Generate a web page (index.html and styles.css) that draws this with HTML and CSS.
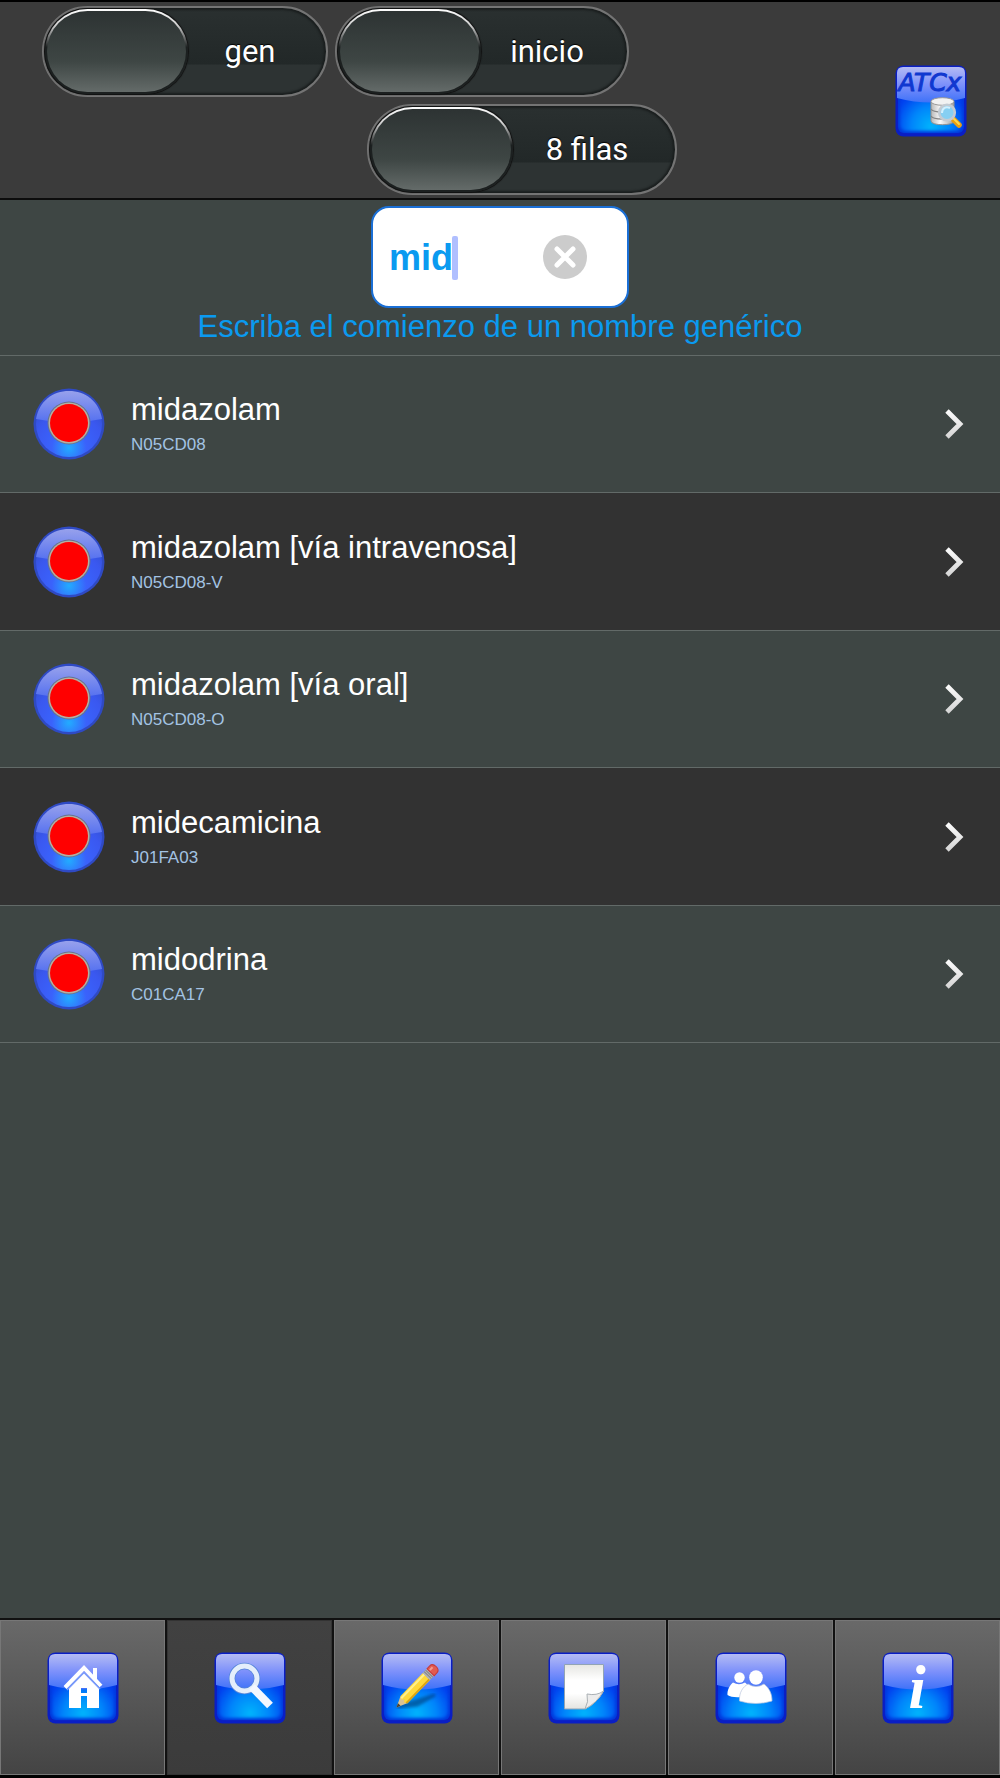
FILE: index.html
```html
<!DOCTYPE html>
<html lang="es">
<head>
<meta charset="UTF-8">
<meta name="viewport" content="width=device-width, initial-scale=1">
<title>ATCx</title>
<link rel="stylesheet" href="styles.css">
</head>
<body>

<!-- shared icon parts -->
<svg class="defs" width="0" height="0" aria-hidden="true">
  <defs>
    <radialGradient id="tileGlow" cx="0.5" cy="0.92" r="0.62">
      <stop offset="0" stop-color="#00b4fc"/>
      <stop offset="0.5" stop-color="#0086fb"/>
      <stop offset="1" stop-color="#003cee"/>
    </radialGradient>
    <linearGradient id="tileGloss" x1="0" y1="0" x2="0" y2="1">
      <stop offset="0" stop-color="#b4bbf4"/>
      <stop offset="0.5" stop-color="#7c90fb"/>
      <stop offset="1" stop-color="#3f72f8"/>
    </linearGradient>
    <radialGradient id="ballGlow" cx="0.5" cy="0.86" r="0.75">
      <stop offset="0" stop-color="#22acff"/>
      <stop offset="0.35" stop-color="#3a62fb"/>
      <stop offset="0.7" stop-color="#3a58f0"/>
      <stop offset="1" stop-color="#3350d0"/>
    </radialGradient>
    <linearGradient id="ballGloss" x1="0" y1="0" x2="0" y2="1">
      <stop offset="0" stop-color="#97a1ec"/>
      <stop offset="1" stop-color="#5470f0"/>
    </linearGradient>
    <linearGradient id="arrowFill" gradientUnits="userSpaceOnUse" x1="0" y1="0" x2="0" y2="32">
      <stop offset="0" stop-color="#fff"/>
      <stop offset="1" stop-color="#d2d2d2"/>
    </linearGradient>
    <linearGradient id="paper" x1="0" y1="0" x2="0" y2="1">
      <stop offset="0" stop-color="#e6e6e2"/>
      <stop offset="0.35" stop-color="#fff"/>
      <stop offset="0.65" stop-color="#fff"/>
      <stop offset="1" stop-color="#e4e4e0"/>
    </linearGradient>
    <linearGradient id="metal" x1="0" y1="0" x2="1" y2="0">
      <stop offset="0" stop-color="#b8b8b8"/>
      <stop offset="0.4" stop-color="#fafafa"/>
      <stop offset="1" stop-color="#a0a0a0"/>
    </linearGradient>
    <filter id="soft"><feGaussianBlur stdDeviation="1.4"/></filter>
  </defs>

  <symbol id="tile" viewBox="0 0 72 72">
    <rect x="0.5" y="0.5" width="71" height="71" rx="8" fill="#0a1ec4"/>
    <rect x="3" y="3" width="66" height="65" rx="6" fill="#0038dc"/>
    <rect x="5" y="5" width="62" height="61" rx="6" fill="url(#tileGlow)" filter="url(#soft)"/>
    <path d="M2 33V8Q2 2 8 2H64Q70 2 70 8V33Q36 42 2 33Z" fill="url(#tileGloss)"/>
  </symbol>

  <symbol id="ball" viewBox="0 0 72 72">
    <circle cx="36" cy="36" r="35.5" fill="#2f4ac4"/>
    <circle cx="36" cy="36" r="33" fill="url(#ballGlow)"/>
    <path d="M3 31C6 13 20 3 36 3S66 13 69 31Q36 38 3 31Z" fill="url(#ballGloss)"/>
    <circle cx="36" cy="35" r="21.5" fill="#65728f"/>
    <circle cx="36" cy="35" r="20.5" fill="#b4aea2"/>
    <circle cx="36" cy="35" r="19" fill="red"/>
  </symbol>

  <symbol id="arrow" viewBox="0 0 20 32">
    <path d="M3 3L16 16L3 29" fill="none" stroke="url(#arrowFill)" stroke-width="4.8"/>
  </symbol>
</svg>

<div class="page">
  <header class="header">
    <div class="toggles">
      <div class="toggle-row">
        <label class="toggle toggle-gen"><input type="checkbox"><span>gen</span></label>
        <label class="toggle toggle-inicio"><input type="checkbox"><span>inicio</span></label>
      </div>
      <div class="toggle-row toggle-row-second">
        <label class="toggle toggle-filas"><input type="checkbox"><span>8 filas</span></label>
      </div>
    </div>
    <svg class="tile-icon" viewBox="0 0 72 72" role="img" aria-label="ATCx">
      <use href="#tile"/>
      <text class="logo-text" x="35" y="26" text-anchor="middle">ATCx</text>
      <path d="M36 37V56C36 61 59 61 59 56V37Z" fill="url(#metal)" stroke="#909090"/>
      <path d="M36 44C38 48 57 48 59 44M36 51C38 55 57 55 59 51" fill="none" stroke="#858585" stroke-width="1.4"/>
      <ellipse cx="47.500" cy="36.500" rx="11.500" ry="3.800" fill="#f2f2f2" stroke="#999"/>
      <path d="M58 54L64 60" stroke="#eb9f12" stroke-width="5.500" stroke-linecap="round"/>
      <path d="M59 54L64 59" stroke="#ffd84a" stroke-width="2" stroke-linecap="round"/>
      <circle cx="52" cy="47.500" r="7.800" fill="#86cff2" stroke="#c3cbd3" stroke-width="2.600"/>
      <path d="M47 48C47 43 51 41 55 43" fill="none" stroke="#d4f0fd" stroke-width="2"/>
    </svg>
  </header>

  <main class="content">
    <form class="search">
      <div class="search-box">
        <input id="q" type="text" value="mid" autocomplete="off">
        <span class="caret"></span>
        <button type="button" class="clear" aria-label="Borrar">
          <svg viewBox="0 0 44 44"><circle cx="22" cy="22" r="22" fill="#ccc"/><path d="M14 14L30 30M30 14L14 30" stroke="#fff" stroke-width="5" stroke-linecap="round"/></svg>
        </button>
      </div>
      <label class="hint" for="q">Escriba el comienzo de un nombre genérico</label>
    </form>

    <ul class="list">
      <li><a href="#N05CD08">
        <svg class="ball-icon"><use href="#ball"/></svg>
        <span class="drug"><span class="name">midazolam</span><span class="code">N05CD08</span></span>
        <svg class="arrow-icon"><use href="#arrow"/></svg>
      </a></li>
      <li><a href="#N05CD08-V">
        <svg class="ball-icon"><use href="#ball"/></svg>
        <span class="drug"><span class="name">midazolam [vía intravenosa]</span><span class="code">N05CD08-V</span></span>
        <svg class="arrow-icon"><use href="#arrow"/></svg>
      </a></li>
      <li><a href="#N05CD08-O">
        <svg class="ball-icon"><use href="#ball"/></svg>
        <span class="drug"><span class="name">midazolam [vía oral]</span><span class="code">N05CD08-O</span></span>
        <svg class="arrow-icon"><use href="#arrow"/></svg>
      </a></li>
      <li><a href="#J01FA03">
        <svg class="ball-icon"><use href="#ball"/></svg>
        <span class="drug"><span class="name">midecamicina</span><span class="code">J01FA03</span></span>
        <svg class="arrow-icon"><use href="#arrow"/></svg>
      </a></li>
      <li><a href="#C01CA17">
        <svg class="ball-icon"><use href="#ball"/></svg>
        <span class="drug"><span class="name">midodrina</span><span class="code">C01CA17</span></span>
        <svg class="arrow-icon"><use href="#arrow"/></svg>
      </a></li>
    </ul>
  </main>

  <nav class="tabs">
    <a href="#inicio" aria-label="Inicio">
      <svg class="tile-icon" viewBox="0 0 72 72">
        <use href="#tile"/>
        <path d="M46 16H50V28L46 24Z" fill="#fff"/>
        <path d="M18 35.500L37 16L54 34" fill="none" stroke="#fff" stroke-width="4"/>
        <path fill-rule="evenodd" d="M37 21L52 36V56H40V44H34V56H22V36ZM34 36V41H40V36Z" fill="#fff"/>
        <path d="M20 38L37 20.500L53 37" fill="none" stroke="#7d9dfa" stroke-width="1.500"/>
      </svg>
    </a>
    <a href="#buscar" class="active" aria-label="Buscar">
      <svg class="tile-icon" viewBox="0 0 72 72">
        <use href="#tile"/>
        <circle cx="30.500" cy="26.500" r="12.500" fill="none" stroke="#5585d8" stroke-width="6.500"/>
        <circle cx="30.500" cy="26.500" r="12.500" fill="none" stroke="#e4eefb" stroke-width="5"/>
        <path d="M38 35L56 53.500" stroke="#f3f7fe" stroke-width="8"/>
      </svg>
    </a>
    <a href="#notas" aria-label="Editar">
      <svg class="tile-icon" viewBox="0 0 72 72">
        <use href="#tile"/>
        <path d="M16 55L54 43L36 53Z" fill="#063b78" stroke="#063b78" stroke-width="3" opacity="0.600" filter="url(#soft)"/>
        <g transform="translate(15.500 55.500) rotate(-46)">
          <path d="M0 0L11 -5V5Z" fill="#dcc294"/>
          <path d="M0 0L4 -1.800V1.800Z" fill="#4a4030"/>
          <path d="M11 -5H43V5H11L9 2L11 0L9 -2Z" fill="#ffd83a"/>
          <path d="M10 -3H43" stroke="#fff08c" stroke-width="2"/>
          <path d="M10 4H43" stroke="#dba313" stroke-width="2"/>
          <path d="M43 -5H49V5H43Z" fill="#b5b5b5"/>
          <path d="M45 -5V5M47 -5V5" stroke="#858585"/>
          <path d="M49 -5H53Q57 -5 57 0T53 5H49Z" fill="#e25b50" stroke="#c63a3a"/>
          <path d="M50 -2H54" stroke="#f49a8e" stroke-width="2"/>
        </g>
      </svg>
    </a>
    <a href="#hoja" aria-label="Documento">
      <svg class="tile-icon" viewBox="0 0 72 72">
        <use href="#tile"/>
        <path d="M16.500 12.500H55.500V39Q49 51 37 57H16.500Z" fill="url(#paper)" stroke="#92a4b4"/>
        <path d="M37 57Q41 50 39 42Q49 44 55.500 39Q49 51 37 57Z" fill="#ececec" stroke="#aab0b4"/>
      </svg>
    </a>
    <a href="#usuarios" aria-label="Usuarios">
      <svg class="tile-icon" viewBox="0 0 72 72">
        <use href="#tile"/>
        <g fill="#fff">
          <circle cx="24.500" cy="25.500" r="5.200"/>
          <path d="M12.500 43C12 38 15 33 18 30.500Q24 34 30 30.500L36 36L27 45Q17 46 12.500 43Z"/>
          <path d="M24.500 49C24 40 28 35 33 32Q41 37 49 32C54 36 57 41 57 49Q41 54 24.500 49Z" stroke="#b9c4dc" stroke-width="0.700"/>
          <ellipse cx="41" cy="25.500" rx="6.800" ry="7.300"/>
        </g>
      </svg>
    </a>
    <a href="#info" aria-label="Información">
      <svg class="tile-icon" viewBox="0 0 72 72">
        <use href="#tile"/>
        <text class="info-text" x="35" y="56" text-anchor="middle">i</text>
      </svg>
    </a>
  </nav>
</div>

</body>
</html>
```

FILE: styles.css
```css
* {
  box-sizing: border-box;
}
body {
  margin: 0;
  background: #000;
  color: #fff;
  font-family: "Liberation Sans", Arial, sans-serif;
}
svg {
  display: block;
  flex-shrink: 0;
}
.defs {
  position: absolute;
}
.page {
  display: flex;
  flex-direction: column;
  min-height: 100vh;
  border-top: 2px solid #000;
  border-bottom: 3px solid #000;
}

/* Header */
.header {
  display: flex;
  justify-content: space-between;
  align-items: center;
  padding: 4px 33px 3px 42px;
  background: #3b3b3b;
  border-bottom: 2px solid #0c0c0c;
}
.toggles {
  display: flex;
  flex-direction: column;
  gap: 7px;
}
.toggle-row {
  display: flex;
  gap: 7px;
}
.toggle-row-second {
  justify-content: flex-end;
  margin-right: -48px;
}
.toggle {
  display: flex;
  align-items: center;
  height: 91px;
  border: 2px solid #747474;
  border-radius: 46px;
  background: linear-gradient(#2a3030, #222828 64%, #2d3333 66%, #2d3333);
  box-shadow: inset 0 0 2px 2px #1a1e1e;
  color: #fff;
  font: 31px/36px Roboto, sans-serif;
  text-shadow: 0 -1px 1px #000;
  cursor: pointer;
}
.toggle input {
  appearance: none;
  flex-shrink: 0;
  width: 143px;
  height: 85px;
  margin: 0 0 0 1px;
  border: 2px solid transparent;
  border-radius: 43px;
  background: linear-gradient(#2d3333, #3e4644 62%, #646b69) padding-box,
    linear-gradient(#fff, #ccc 20%, #1c2020 45%) border-box;
  box-shadow: 0 0 1px 1px #111;
}
.toggle span {
  flex: 1;
  padding-right: 14px;
  text-align: center;
}
.toggle-gen {
  width: 286px;
}
.toggle-inicio {
  width: 294px;
}
.toggle-filas {
  width: 310px;
}
.tile-icon {
  width: 72px;
  height: 72px;
}
.logo-text {
  fill: #1038d0;
  stroke: #1038d0;
  font: italic 25px "DejaVu Sans", sans-serif;
}

/* Search */
.content {
  flex: 1;
  background: #3e4644;
}
.search {
  display: flex;
  flex-direction: column;
  align-items: center;
  padding: 6px 0 10px;
}
.search-box {
  position: relative;
  display: flex;
  align-items: center;
  width: 258px;
  height: 102px;
  padding: 0 40px 0 16px;
  background: #fff;
  border: 2px solid #1a6fd6;
  border-radius: 18px;
}
.search-box input {
  flex: 1;
  min-width: 0;
  padding: 2px 0 0;
  border: 0;
  outline: none;
  background: none;
  color: #0a9af0;
  font: bold 36px/44px "Liberation Sans", Arial, sans-serif;
}
/* text cursor, right after the typed text */
.caret {
  position: absolute;
  left: 79px;
  top: 28px;
  width: 6px;
  height: 44px;
  border-radius: 2px;
  background: #b0bfff;
}
.clear {
  width: 44px;
  height: 44px;
  padding: 0;
  border: 0;
  background: none;
}
.hint {
  padding-top: 1px;
  color: #0a9af0;
  font-size: 31px;
  line-height: 36px;
}

/* Results */
.list {
  margin: 0;
  padding: 0;
  list-style: none;
  border-top: 1px solid #626a68;
}
.list a {
  display: flex;
  align-items: center;
  height: 137px;
  padding: 0 36px 0 33px;
  border-bottom: 1px solid #626a68;
  color: #fff;
  text-decoration: none;
}
.list li:nth-child(even) a {
  height: 138px;
  background: #323232;
}
.ball-icon {
  width: 72px;
  height: 72px;
}
.drug {
  flex: 1;
  display: flex;
  flex-direction: column;
  padding: 2px 0 0 26px;
}
.name {
  font-size: 31px;
  line-height: 40px;
}
.code {
  color: #a3c3e3;
  font-size: 17px;
  line-height: 30px;
}
.arrow-icon {
  width: 20px;
  height: 32px;
}

/* Bottom tabs */
.tabs {
  display: grid;
  grid-template-columns: repeat(6, 1fr);
  gap: 2px;
  padding-top: 2px;
  background: #111;
}
.tabs a {
  display: flex;
  justify-content: center;
  height: 155px;
  padding-top: 31px;
  border: 1px solid #777;
  background: linear-gradient(#696969, #444);
}
.tabs a.active {
  border-color: #333;
  background: linear-gradient(#414141, #3b3b3b);
}
.info-text {
  fill: #fff;
  font: italic bold 62px "Liberation Serif", serif;
}
```
